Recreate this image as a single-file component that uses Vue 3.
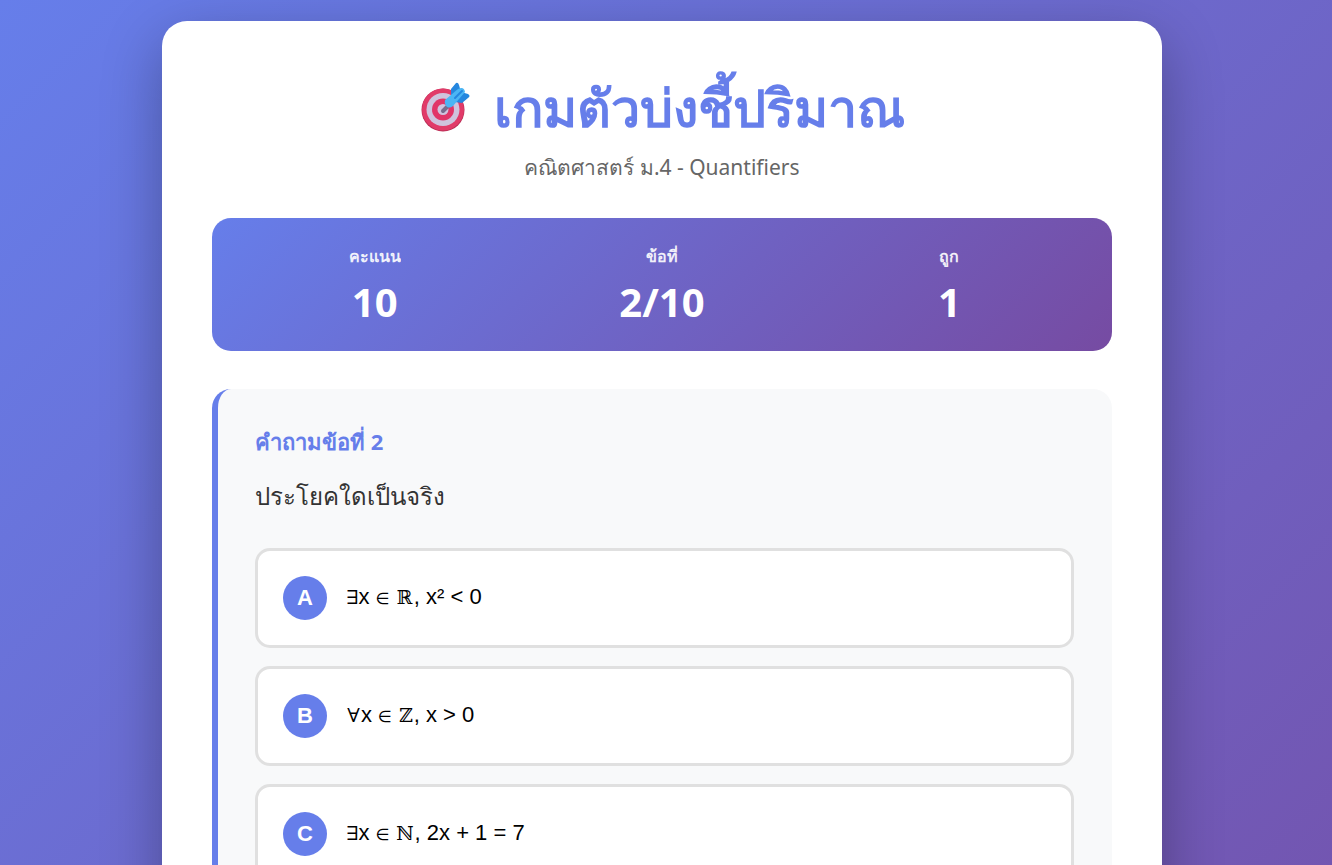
<script setup>
const stats = [
  { label: 'คะแนน', value: '10' },
  { label: 'ข้อที่', value: '2/10' },
  { label: 'ถูก', value: '1' },
]
const choices = [
  { key: 'A', quantifier: '∃', set: 'ℝ', condition: 'x² < 0' },
  { key: 'B', quantifier: '∀', set: 'ℤ', condition: 'x > 0' },
  { key: 'C', quantifier: '∃', set: 'ℕ', condition: '2x + 1 = 7' },
]
</script>

<template>
  <div class="page">
    <main class="card">
      <header>
        <h1>
          <svg class="target" viewBox="0 0 52 52" aria-hidden="true">
            <circle cx="23" cy="29" r="21.5" fill="#b82d54" />
            <circle cx="23" cy="28.5" r="21" fill="#e13b69" />
            <circle cx="23" cy="28.5" r="16.5" fill="#cfc3dd" />
            <circle cx="23" cy="28.5" r="11" fill="#e13467" />
            <circle cx="23" cy="28.5" r="5.5" fill="#cfc3dd" />
            <path d="M23 30 30 23" stroke="#786c8c" stroke-width="4" stroke-linecap="round" />
            <path d="M31 15 31 8 36 2Q38 1 39 4L41 11 48 13Q51 15 48 17L42 22 35 21Z" fill="#2587df" />
            <path d="M25 19 38 8Q44 5 45 11L33 25Q29 28 26 25 24 22 25 19Z" fill="#4ab5f4" />
            <path d="M35 17 42 10" stroke="#2587df" stroke-width="2" stroke-linecap="round" />
          </svg>
          <span>เกมตัวบ่งชี้ปริมาณ</span>
        </h1>
        <p class="subtitle">คณิตศาสตร์ ม.4 - Quantifiers</p>
      </header>
      <section class="stats">
        <div v-for="s in stats" :key="s.label" class="stat">
          <div class="label">{{ s.label }}</div>
          <div class="value">{{ s.value }}</div>
        </div>
      </section>
      <section class="question">
        <h2>คำถามข้อที่ 2</h2>
        <p class="prompt">ประโยคใดเป็นจริง</p>
        <div class="choices">
          <button v-for="c in choices" :key="c.key" type="button" class="choice">
            <span class="letter">{{ c.key }}</span>
            <span class="formula"><span class="symbol">{{ c.quantifier }}</span>x <span class="member">∈</span> <span class="symbol">{{ c.set }}</span>, {{ c.condition }}</span>
          </button>
        </div>
      </section>
    </main>
  </div>
</template>

<style>
html { scrollbar-width: none; }
body { margin: 0; }
</style>

<style scoped>
* { box-sizing: border-box; }
.page {
  display: flex;
  flex-direction: column;
  align-items: center;
  min-height: 168vh;
  padding: 21px 28px 21px 20px;
  background: linear-gradient(135deg, #667eea, #764ba2);
  font-family: "Noto Sans", "Open Sans", sans-serif;
}
.card {
  flex: 1;
  width: 100%;
  max-width: 1000px;
  padding: 50px;
  border-radius: 25px;
  background: #fff;
  box-shadow: 0 20px 60px rgba(0, 0, 0, 0.3);
}
h1, h2, p { margin: 0; }
h1 {
  display: flex;
  align-items: center;
  justify-content: center;
  gap: 22px;
  color: #667eea;
  font-size: 52px;
  line-height: 72px;
}
.target { width: 52px; height: 52px; }
.subtitle { color: #666; font-size: 21px; line-height: 32px; text-align: center; margin-top: 8px; }
.stats {
  display: grid;
  grid-template-columns: repeat(3, 1fr);
  margin-top: 35px;
  padding: 22px 19px 19px;
  border-radius: 19px;
  color: #fff;
  text-align: center;
  background: linear-gradient(135deg, #667eea, #764ba2);
}
.label { font-size: 16px; line-height: 32px; font-weight: 600; opacity: 0.9; }
.value { font-size: 40px; line-height: 60px; font-weight: 700; }
.question {
  margin-top: 38px;
  padding: 37px 38px 37px 37px;
  border-left: 6px solid #667eea;
  border-radius: 19px;
  background: #f8f9fa;
}
h2 { color: #667eea; font-size: 22px; line-height: 30px; }
.prompt { margin-top: 20px; color: #333; font-size: 24px; line-height: 40px; }
.choices { display: grid; gap: 18px; margin-top: 32px; }
.choice {
  display: flex;
  align-items: center;
  gap: 19px;
  padding: 25px;
  border: 3px solid #e0e0e0;
  border-radius: 15px;
  background: #fff;
  color: #000;
  font: 22px/32px "Liberation Sans", "DejaVu Sans", sans-serif;
  text-align: left;
}
.letter {
  width: 44px;
  height: 44px;
  border-radius: 50%;
  background: #667eea;
  color: #fff;
  font-weight: 700;
  line-height: 44px;
  text-align: center;
}
.formula { line-height: 28px; padding-bottom: 2px; }
.symbol { font-family: "DejaVu Math TeX Gyre", "DejaVu Sans", sans-serif; font-size: 19px; line-height: 1; }
.member { font-family: "DejaVu Sans", sans-serif; font-size: 16px; line-height: 1; }
</style>
